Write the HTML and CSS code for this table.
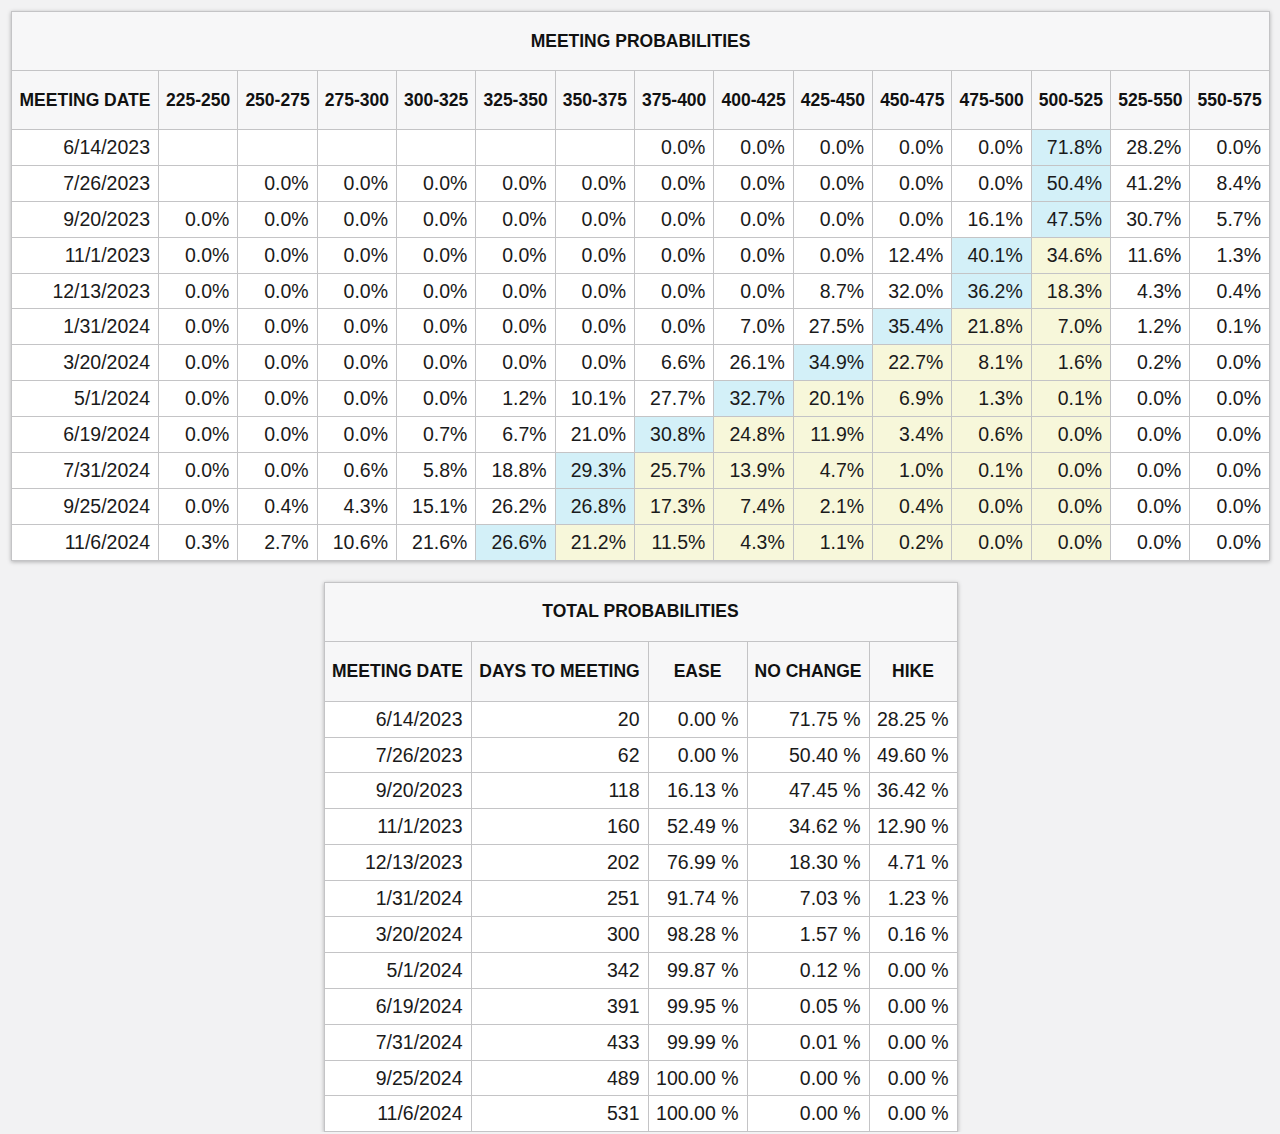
FILE: index.html
```html
<!DOCTYPE html>
<html>
<head>
<meta charset="utf-8">
<link rel="stylesheet" href="styles.css">
</head>
<body>
<div class="page">
<table class="grid prob">
<colgroup><col class="c-date"><col span="14"></colgroup>
<thead>
<tr class="title"><th colspan="15">MEETING PROBABILITIES</th></tr>
<tr class="head"><th>MEETING DATE</th><th>225-250</th><th>250-275</th><th>275-300</th><th>300-325</th><th>325-350</th><th>350-375</th><th>375-400</th><th>400-425</th><th>425-450</th><th>450-475</th><th>475-500</th><th>500-525</th><th>525-550</th><th>550-575</th></tr>
</thead>
<tbody>
<tr><td>6/14/2023</td><td></td><td></td><td></td><td></td><td></td><td></td><td>0.0%</td><td>0.0%</td><td>0.0%</td><td>0.0%</td><td>0.0%</td><td class="b">71.8%</td><td>28.2%</td><td>0.0%</td></tr>
<tr><td>7/26/2023</td><td></td><td>0.0%</td><td>0.0%</td><td>0.0%</td><td>0.0%</td><td>0.0%</td><td>0.0%</td><td>0.0%</td><td>0.0%</td><td>0.0%</td><td>0.0%</td><td class="b">50.4%</td><td>41.2%</td><td>8.4%</td></tr>
<tr><td>9/20/2023</td><td>0.0%</td><td>0.0%</td><td>0.0%</td><td>0.0%</td><td>0.0%</td><td>0.0%</td><td>0.0%</td><td>0.0%</td><td>0.0%</td><td>0.0%</td><td>16.1%</td><td class="b">47.5%</td><td>30.7%</td><td>5.7%</td></tr>
<tr><td>11/1/2023</td><td>0.0%</td><td>0.0%</td><td>0.0%</td><td>0.0%</td><td>0.0%</td><td>0.0%</td><td>0.0%</td><td>0.0%</td><td>0.0%</td><td>12.4%</td><td class="b">40.1%</td><td class="y">34.6%</td><td>11.6%</td><td>1.3%</td></tr>
<tr><td>12/13/2023</td><td>0.0%</td><td>0.0%</td><td>0.0%</td><td>0.0%</td><td>0.0%</td><td>0.0%</td><td>0.0%</td><td>0.0%</td><td>8.7%</td><td>32.0%</td><td class="b">36.2%</td><td class="y">18.3%</td><td>4.3%</td><td>0.4%</td></tr>
<tr><td>1/31/2024</td><td>0.0%</td><td>0.0%</td><td>0.0%</td><td>0.0%</td><td>0.0%</td><td>0.0%</td><td>0.0%</td><td>7.0%</td><td>27.5%</td><td class="b">35.4%</td><td class="y">21.8%</td><td class="y">7.0%</td><td>1.2%</td><td>0.1%</td></tr>
<tr><td>3/20/2024</td><td>0.0%</td><td>0.0%</td><td>0.0%</td><td>0.0%</td><td>0.0%</td><td>0.0%</td><td>6.6%</td><td>26.1%</td><td class="b">34.9%</td><td class="y">22.7%</td><td class="y">8.1%</td><td class="y">1.6%</td><td>0.2%</td><td>0.0%</td></tr>
<tr><td>5/1/2024</td><td>0.0%</td><td>0.0%</td><td>0.0%</td><td>0.0%</td><td>1.2%</td><td>10.1%</td><td>27.7%</td><td class="b">32.7%</td><td class="y">20.1%</td><td class="y">6.9%</td><td class="y">1.3%</td><td class="y">0.1%</td><td>0.0%</td><td>0.0%</td></tr>
<tr><td>6/19/2024</td><td>0.0%</td><td>0.0%</td><td>0.0%</td><td>0.7%</td><td>6.7%</td><td>21.0%</td><td class="b">30.8%</td><td class="y">24.8%</td><td class="y">11.9%</td><td class="y">3.4%</td><td class="y">0.6%</td><td class="y">0.0%</td><td>0.0%</td><td>0.0%</td></tr>
<tr><td>7/31/2024</td><td>0.0%</td><td>0.0%</td><td>0.6%</td><td>5.8%</td><td>18.8%</td><td class="b">29.3%</td><td class="y">25.7%</td><td class="y">13.9%</td><td class="y">4.7%</td><td class="y">1.0%</td><td class="y">0.1%</td><td class="y">0.0%</td><td>0.0%</td><td>0.0%</td></tr>
<tr><td>9/25/2024</td><td>0.0%</td><td>0.4%</td><td>4.3%</td><td>15.1%</td><td>26.2%</td><td class="b">26.8%</td><td class="y">17.3%</td><td class="y">7.4%</td><td class="y">2.1%</td><td class="y">0.4%</td><td class="y">0.0%</td><td class="y">0.0%</td><td>0.0%</td><td>0.0%</td></tr>
<tr><td>11/6/2024</td><td>0.3%</td><td>2.7%</td><td>10.6%</td><td>21.6%</td><td class="b">26.6%</td><td class="y">21.2%</td><td class="y">11.5%</td><td class="y">4.3%</td><td class="y">1.1%</td><td class="y">0.2%</td><td class="y">0.0%</td><td class="y">0.0%</td><td>0.0%</td><td>0.0%</td></tr>
</tbody>
</table>

<table class="grid total">
<colgroup><col class="t1"><col class="t2"><col class="t3"><col class="t4"><col class="t5"></colgroup>
<thead>
<tr class="title"><th colspan="5">TOTAL PROBABILITIES</th></tr>
<tr class="head"><th>MEETING DATE</th><th>DAYS TO MEETING</th><th>EASE</th><th>NO CHANGE</th><th>HIKE</th></tr>
</thead>
<tbody>
<tr><td>6/14/2023</td><td>20</td><td>0.00 %</td><td>71.75 %</td><td>28.25 %</td></tr>
<tr><td>7/26/2023</td><td>62</td><td>0.00 %</td><td>50.40 %</td><td>49.60 %</td></tr>
<tr><td>9/20/2023</td><td>118</td><td>16.13 %</td><td>47.45 %</td><td>36.42 %</td></tr>
<tr><td>11/1/2023</td><td>160</td><td>52.49 %</td><td>34.62 %</td><td>12.90 %</td></tr>
<tr><td>12/13/2023</td><td>202</td><td>76.99 %</td><td>18.30 %</td><td>4.71 %</td></tr>
<tr><td>1/31/2024</td><td>251</td><td>91.74 %</td><td>7.03 %</td><td>1.23 %</td></tr>
<tr><td>3/20/2024</td><td>300</td><td>98.28 %</td><td>1.57 %</td><td>0.16 %</td></tr>
<tr><td>5/1/2024</td><td>342</td><td>99.87 %</td><td>0.12 %</td><td>0.00 %</td></tr>
<tr><td>6/19/2024</td><td>391</td><td>99.95 %</td><td>0.05 %</td><td>0.00 %</td></tr>
<tr><td>7/31/2024</td><td>433</td><td>99.99 %</td><td>0.01 %</td><td>0.00 %</td></tr>
<tr><td>9/25/2024</td><td>489</td><td>100.00 %</td><td>0.00 %</td><td>0.00 %</td></tr>
<tr><td>11/6/2024</td><td>531</td><td>100.00 %</td><td>0.00 %</td><td>0.00 %</td></tr>
</tbody>
</table>
</div>
</body>
</html>
```
FILE: styles.css
```css
html, body {
  margin: 0;
  padding: 0;
  background: #f2f2f3;
}
body {
  font-family: "Liberation Sans", Arial, sans-serif;
  color: #111;
}
.page {
  padding: 11px 10px 0 11px;
  display: flex;
  flex-direction: column;
  align-items: center;
  gap: 21px;
}
.grid {
  border-collapse: collapse;
  table-layout: fixed;
  background: #fff;
  box-shadow: 0 1px 4px rgba(0, 0, 0, 0.28);
}
.prob {
  width: 1259px;
  align-self: flex-start;
}
.c-date { width: 147px; }
.total { width: 633px; }
.t1 { width: 147px; }
.t2 { width: 177px; }
.t3 { width: 99px; }
.t4 { width: 122px; }
.t5 { width: 88px; }

.grid th, .grid td {
  border: 1px solid #c4c4c6;
  padding: 0 8px 0 4px;
  white-space: nowrap;
}
.grid th {
  background: #f7f7f8;
  font-weight: bold;
  font-size: 17.5px;
  text-align: center;
  padding: 0 2px;
}
.grid .title th {
  height: 58px;
}
.grid .head th {
  height: 58px;
}
.total .head th {
  height: 59px;
}
.grid td {
  height: 34.9px;
  font-size: 19.5px;
  text-align: right;
  color: #1a1a1a;
}
.grid td.b { background: #d3f0f8; }
.grid td.y { background: #f7f7da; }
```
